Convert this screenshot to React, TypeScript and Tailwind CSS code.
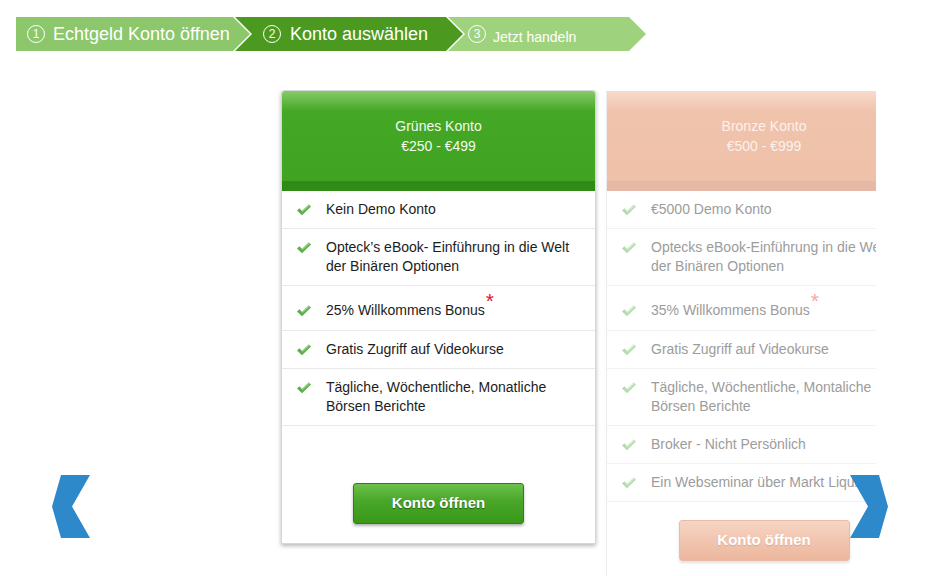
import type { FC } from 'react'

type Row = { text: string; star?: boolean }

const greenRows: Row[] = [
  { text: 'Kein Demo Konto' },
  { text: 'Opteck’s eBook- Einführung in die Welt der Binären Optionen' },
  { text: '25% Willkommens Bonus', star: true },
  { text: 'Gratis Zugriff auf Videokurse' },
  { text: 'Tägliche, Wöchentliche, Monatliche Börsen Berichte' },
]

const bronzeRows: Row[] = [
  { text: '€5000 Demo Konto' },
  { text: 'Optecks eBook-Einführung in die Welt der Binären Optionen' },
  { text: '35% Willkommens Bonus', star: true },
  { text: 'Gratis Zugriff auf Videokurse' },
  { text: 'Tägliche, Wöchentliche, Montaliche Börsen Berichte' },
  { text: 'Broker - Nicht Persönlich' },
  { text: 'Ein Webseminar über Markt Liquidität' },
]

const Check: FC<{ faded?: boolean }> = ({ faded }) => (
  <svg width="14" height="12" viewBox="0 0 14 12" className="mt-[4px] shrink-0">
    <polygon
      points="0,6.5 2.4,4.2 5,7 11.8,0.4 14,2.4 5,11.2"
      fill={faded ? '#b5dcae' : '#5cae4a'}
    />
    <polygon points="5,7 11.8,0.4 13,1.5 5,8.6" fill={faded ? '#d4ecd0' : '#8fd07c'} />
  </svg>
)

const Circled: FC<{ n: number }> = ({ n }) => (
  <span className="flex h-[18px] w-[18px] shrink-0 items-center justify-center rounded-full border border-white text-[12px] leading-none">
    {n}
  </span>
)

const Steps = () => (
  <div className="flex h-[34px] pl-[16px] text-white">
    <div className="flex w-[234px] items-center gap-[8px] bg-[#8cc76c] pl-[11px] text-[18px] [clip-path:polygon(0_0,calc(100%-17px)_0,100%_50%,calc(100%-17px)_100%,0_100%)]">
      <Circled n={1} />
      <span>Echtgeld Konto öffnen</span>
    </div>
    <div className="-ml-[15px] flex w-[228px] items-center gap-[9px] bg-[#4b9a1f] pl-[28px] text-[18px] [clip-path:polygon(0_0,calc(100%-17px)_0,100%_50%,calc(100%-17px)_100%,0_100%,17px_50%)]">
      <Circled n={2} />
      <span>Konto auswählen</span>
    </div>
    <div className="-ml-[15px] flex w-[198px] items-center gap-[7px] bg-[#9fd27d] pl-[20px] text-[14px] [clip-path:polygon(0_0,calc(100%-17px)_0,100%_50%,calc(100%-17px)_100%,0_100%,17px_50%)]">
      <Circled n={3} />
      <span className="mt-[6px]">Jetzt handeln</span>
    </div>
  </div>
)

type CardProps = {
  title: string
  price: string
  rows: Row[]
  bronze?: boolean
}

const Card: FC<CardProps> = ({ title, price, rows, bronze }) => (
  <div
    className={
      bronze
        ? 'w-[315px] shrink-0 border-t border-l border-t-white border-l-[#ececec] bg-white'
        : 'w-[315px] shrink-0 rounded-t-[3px] border border-[#d6d6d6] bg-white shadow-[0_2px_4px_rgba(0,0,0,0.28)]'
    }
  >
    <div
      className={
        bronze
          ? 'flex h-[90px] flex-col items-center bg-[linear-gradient(to_bottom,#f7dbcd,#f0c3ac_20px,#efc1a9)] pt-[25px] text-[14px] leading-[20px] text-[#fcf1ea]'
          : 'flex h-[90px] flex-col items-center rounded-t-[3px] bg-[linear-gradient(to_bottom,#86cb68,#45a726_20px,#40a321)] pt-[25px] text-[14px] leading-[20px] text-[#f3faee]'
      }
    >
      <span>{title}</span>
      <span>{price}</span>
    </div>
    <div className={bronze ? 'h-[10px] bg-[#e6b8a8]' : 'h-[10px] bg-[#2f8b16]'} />
    <div className="min-h-[274px]">
      {rows.map((row) => (
        <div
          key={row.text}
          className={`flex gap-[15px] border-b pl-[15px] text-[14px] leading-[19px] ${
            bronze ? 'border-[#f2f2f2] pr-[30px] text-[#9c9c9c]' : 'border-[#e9e9e9] pr-[6px] text-[#1c1c1c]'
          } ${row.star ? 'pt-[15px] pb-[10px]' : 'py-[9px]'}`}
        >
          <Check faded={bronze} />
          <span>
            {row.text}
            {row.star && (
              <span
                className={`relative -top-[7px] ml-[1px] text-[21px] leading-[0] ${
                  bronze ? 'text-[#f6a5a5]' : 'text-[#e8141b]'
                }`}
              >
                *
              </span>
            )}
          </span>
        </div>
      ))}
    </div>
    <div className="flex justify-center pt-[18px] pb-[19px]">
      <button
        type="button"
        className={
          bronze
            ? 'h-[41px] w-[171px] rounded-[3px] border border-[#ebbca5] bg-[linear-gradient(to_bottom,#f6d5c4,#ecb69c)] text-[15px] font-bold text-white shadow-[0_2px_3px_rgba(0,0,0,0.12)] [text-shadow:0_1px_1px_rgba(0,0,0,0.12)]'
            : 'h-[41px] w-[171px] rounded-[3px] border border-[#2f7f14] bg-[linear-gradient(to_bottom,#6cc14c,#48a628_45%,#3a9819)] text-[15px] font-bold text-white shadow-[0_2px_3px_rgba(0,0,0,0.3)] [text-shadow:0_1px_1px_rgba(0,0,0,0.45)]'
        }
      >
        Konto öffnen
      </button>
    </div>
  </div>
)

const Chevron: FC<{ right?: boolean; className: string }> = ({ right, className }) => (
  <svg width="38" height="63" viewBox="0 0 38 63" className={className}>
    <polygon
      points={right ? '29,0 0,0 18,31.5 0,63 29,63 38,31.5' : '9,0 38,0 20,31.5 38,63 9,63 0,31.5'}
      fill="#2d89c9"
    />
  </svg>
)

export default function App() {
  return (
    <div className="relative h-[576px] w-[934px] overflow-hidden bg-white pt-[17px] font-['Liberation_Sans',Arial,sans-serif]">
      <Steps />
      <div className="mt-[39px] ml-[276px] flex w-[600px] items-start gap-[10px] overflow-hidden pb-[10px] pl-[5px]">
        <Card title="Grünes Konto" price="€250 - €499" rows={greenRows} />
        <Card title="Bronze Konto" price="€500 - €999" rows={bronzeRows} bronze />
      </div>
      <Chevron className="absolute top-[475px] left-[52px]" />
      <Chevron right className="absolute top-[475px] left-[850px]" />
    </div>
  )
}
